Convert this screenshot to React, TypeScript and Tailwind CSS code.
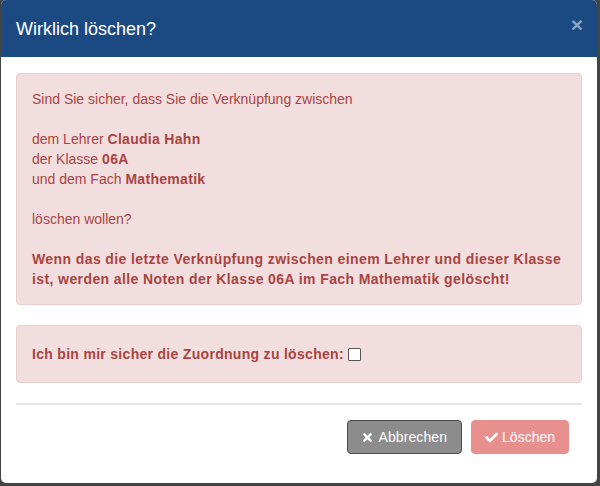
import React from "react";
import { FaTimes, FaCheck } from "react-icons/fa";

export default function App() {
  return (
    <div
      className="w-[600px] h-[486px] bg-[#444] overflow-hidden"
      style={{ fontFamily: '"Liberation Sans", Arial, sans-serif' }}
    >
      <div className="ml-[1px] w-[596px] h-[483px] bg-white rounded-[5px] overflow-hidden flex flex-col">
        <div className="h-[57px] bg-[#1b4a83] flex items-center justify-between pl-[15px] pr-[14px] shrink-0">
          <div className="text-white text-[18px] leading-none">Wirklich löschen?</div>
          <div className="text-[#8ea3c3] text-[21px] font-bold leading-none -mt-[8px]">×</div>
        </div>
        <div className="px-[15px] pt-[16px] flex flex-col">
          <div className="bg-[#f2dede] border border-[#ebccd1] rounded-[4px] text-[#a94442] text-[14px] leading-5 px-[15px] py-[15px]">
            <div>Sind Sie sicher, dass Sie die Verknüpfung zwischen</div>
            <div className="h-5" />
            <div>
              dem Lehrer <b className="tracking-[0.3px]">Claudia Hahn</b>
            </div>
            <div>
              der Klasse <b className="tracking-[0.3px]">06A</b>
            </div>
            <div>
              und dem Fach <b className="tracking-[0.3px]">Mathematik</b>
            </div>
            <div className="h-5" />
            <div>löschen wollen?</div>
            <div className="h-5" />
            <div className="font-bold tracking-[0.4px]">
              Wenn das die letzte Verknüpfung zwischen einem Lehrer und dieser Klasse ist, werden alle Noten der Klasse 06A im Fach Mathematik gelöscht!
            </div>
          </div>
          <div className="mt-[20px] h-[58px] bg-[#f2dede] border border-[#ebccd1] rounded-[4px] text-[#a94442] text-[14px] leading-5 px-[15px] flex items-center">
            <span className="font-bold tracking-[0.3px]">Ich bin mir sicher die Zuordnung zu löschen:</span>
            <span className="ml-[4px] inline-block w-[13px] h-[13px] bg-white border border-[#555] rounded-[1px] mt-[1px]" />
          </div>
          <div className="mt-[20px] h-[2px] bg-[#e5e5e5]" />
          <div className="flex justify-end gap-[9px] mt-[15px] pr-[13px]">
            <div className="h-[34px] pl-[13px] pr-[14px] flex items-center gap-[4px] bg-[#8c8c8c] border border-[#4a4a4a] rounded-[4px] text-white text-[14px] tracking-[0.1px]">
              <FaTimes className="w-[13px] h-[13px]" />
              <span>Abbrechen</span>
            </div>
            <div className="h-[34px] px-[13px] flex items-center gap-[4px] bg-[#e8908e] border border-[#e8908e] rounded-[4px] text-white text-[14px]">
              <FaCheck className="w-[13px] h-[13px]" />
              <span>Löschen</span>
            </div>
          </div>
        </div>
      </div>
    </div>
  );
}
